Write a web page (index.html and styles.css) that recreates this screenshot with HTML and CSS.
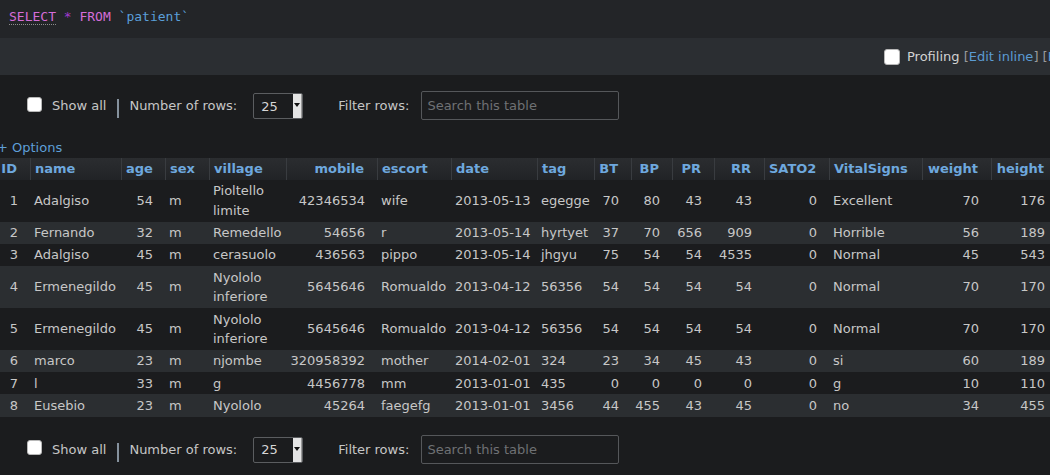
FILE: index.html
```html
<!DOCTYPE html>
<html lang="en">
<head>
<meta charset="utf-8">
<title>patient</title>
<link rel="stylesheet" href="styles.css">
</head>
<body>
<div class="sqlbar"><span class="kw kw-select">SELECT</span> <span class="op">*</span> <span class="kw">FROM</span> <span class="ident">`patient`</span></div>
<div class="toolbar">
  <input type="checkbox" class="cb cb-prof">
  <span class="prof">Profiling</span>&nbsp;<span class="br">[</span><a class="link">Edit inline</a><span class="br">]</span>&nbsp;<span class="br">[</span><a class="link">Edit</a><span class="br">]</span>&nbsp;<span class="br">[</span><a class="link">Explain SQL</a><span class="br">]</span>
</div>
<div class="results">
  <div class="controls controls-top">
    <input type="checkbox" class="cb">
    <span class="lbl">Show all</span>
    <span class="sep"></span>
    <span class="lbl lbl-rows">Number of rows:</span>
    <span class="sel"><select><option>25</option></select></span>
    <span class="lbl lbl-filter">Filter rows:</span>
    <input type="text" class="search" placeholder="Search this table">
  </div>
  <div class="options">+ Options</div>
  <table class="data">
    <colgroup>
      <col class="w-id"><col class="w-name"><col class="w-age"><col class="w-sex"><col class="w-village"><col class="w-mobile"><col class="w-escort"><col class="w-date"><col class="w-tag"><col class="w-bt"><col class="w-bp"><col class="w-pr"><col class="w-rr"><col class="w-sato2"><col class="w-vital"><col class="w-weight"><col class="w-height">
    </colgroup>
    <thead>
      <tr>
        <th class="num">ID</th><th>name</th><th class="num">age</th><th>sex</th><th>village</th><th class="num">mobile</th><th>escort</th><th>date</th><th>tag</th><th class="num">BT</th><th class="num">BP</th><th class="num">PR</th><th class="num">RR</th><th class="num">SATO2</th><th>VitalSigns</th><th class="num">weight</th><th class="num">height</th>
      </tr>
    </thead>
    <tbody>
      <tr><td class="num">1</td><td>Adalgiso</td><td class="num">54</td><td>m</td><td>Pioltello limite</td><td class="num">42346534</td><td>wife</td><td>2013-05-13</td><td>egegge</td><td class="num">70</td><td class="num">80</td><td class="num">43</td><td class="num">43</td><td class="num">0</td><td>Excellent</td><td class="num">70</td><td class="num">176</td></tr>
      <tr><td class="num">2</td><td>Fernando</td><td class="num">32</td><td>m</td><td>Remedello</td><td class="num">54656</td><td>r</td><td>2013-05-14</td><td>hyrtyet</td><td class="num">37</td><td class="num">70</td><td class="num">656</td><td class="num">909</td><td class="num">0</td><td>Horrible</td><td class="num">56</td><td class="num">189</td></tr>
      <tr><td class="num">3</td><td>Adalgiso</td><td class="num">45</td><td>m</td><td>cerasuolo</td><td class="num">436563</td><td>pippo</td><td>2013-05-14</td><td>jhgyu</td><td class="num">75</td><td class="num">54</td><td class="num">54</td><td class="num">4535</td><td class="num">0</td><td>Normal</td><td class="num">45</td><td class="num">543</td></tr>
      <tr><td class="num">4</td><td>Ermenegildo</td><td class="num">45</td><td>m</td><td>Nyololo inferiore</td><td class="num">5645646</td><td>Romualdo</td><td>2013-04-12</td><td>56356</td><td class="num">54</td><td class="num">54</td><td class="num">54</td><td class="num">54</td><td class="num">0</td><td>Normal</td><td class="num">70</td><td class="num">170</td></tr>
      <tr><td class="num">5</td><td>Ermenegildo</td><td class="num">45</td><td>m</td><td>Nyololo inferiore</td><td class="num">5645646</td><td>Romualdo</td><td>2013-04-12</td><td>56356</td><td class="num">54</td><td class="num">54</td><td class="num">54</td><td class="num">54</td><td class="num">0</td><td>Normal</td><td class="num">70</td><td class="num">170</td></tr>
      <tr><td class="num">6</td><td>marco</td><td class="num">23</td><td>m</td><td>njombe</td><td class="num">320958392</td><td>mother</td><td>2014-02-01</td><td>324</td><td class="num">23</td><td class="num">34</td><td class="num">45</td><td class="num">43</td><td class="num">0</td><td>si</td><td class="num">60</td><td class="num">189</td></tr>
      <tr><td class="num">7</td><td>l</td><td class="num">33</td><td>m</td><td>g</td><td class="num">4456778</td><td>mm</td><td>2013-01-01</td><td>435</td><td class="num">0</td><td class="num">0</td><td class="num">0</td><td class="num">0</td><td class="num">0</td><td>g</td><td class="num">10</td><td class="num">110</td></tr>
      <tr><td class="num">8</td><td>Eusebio</td><td class="num">23</td><td>m</td><td>Nyololo</td><td class="num">45264</td><td>faegefg</td><td>2013-01-01</td><td>3456</td><td class="num">44</td><td class="num">455</td><td class="num">43</td><td class="num">45</td><td class="num">0</td><td>no</td><td class="num">34</td><td class="num">455</td></tr>
    </tbody>
  </table>
  <div class="controls controls-bottom">
    <input type="checkbox" class="cb">
    <span class="lbl">Show all</span>
    <span class="sep"></span>
    <span class="lbl lbl-rows">Number of rows:</span>
    <span class="sel"><select><option>25</option></select></span>
    <span class="lbl lbl-filter">Filter rows:</span>
    <input type="text" class="search" placeholder="Search this table">
  </div>
</div>
</body>
</html>
```
FILE: styles.css
```css
html, body {
  margin: 0;
  padding: 0;
  background: #1b1c1e;
  color: #c8c8c8;
  font-family: "DejaVu Sans", sans-serif;
  font-size: 13px;
  overflow: hidden;
}

.sqlbar {
  background: #232528;
  height: 38px;
  box-sizing: border-box;
  padding: 9px 9px 0;
  font-family: "DejaVu Sans Mono", monospace;
  font-size: 13px;
  line-height: 16px;
  color: #a0a0a0;
  white-space: nowrap;
}
.kw { color: #d56dd8; }
.kw-select { border-bottom: 1px dotted #8c8c8c; }
.op { color: #a53acf; }
.ident { color: #5a9fd9; }

.toolbar {
  background: #2b2e32;
  height: 37px;
  display: flex;
  align-items: center;
  padding-left: 884px;
  white-space: nowrap;
  overflow: hidden;
}
.prof { color: #d2d2d2; }
.br { color: #9a9a9a; }
.link { color: #5b9bd3; }

.cb {
  appearance: none;
  -webkit-appearance: none;
  width: 15px;
  height: 15px;
  margin: 0;
  box-sizing: border-box;
  background: #ffffff;
  border: 1px solid #b8b8b8;
  border-radius: 3px;
  flex: none;
}
.cb-prof { width: 16px; height: 16px; margin-right: 7px; }

.results {
  margin-left: -3px;
}

.controls {
  display: flex;
  align-items: center;
  height: 29px;
  padding-left: 30px;
  white-space: nowrap;
}
.controls-top { margin-top: 16px; }
.controls-bottom { margin-top: 18px; }
.controls .cb { margin-right: 10px; margin-top: -3px; }
.lbl { color: #c6c6c6; }
.sep {
  width: 2px;
  height: 19px;
  background: #85919d;
  margin-left: 11px;
  margin-top: 6px;
}
.lbl-rows { margin-left: 10px; }
.sel {
  position: relative;
  display: inline-block;
  margin-left: 16px;
  width: 50px;
  height: 26px;
  margin-top: 1px;
}
.sel select {
  appearance: none;
  -webkit-appearance: none;
  width: 50px;
  height: 26px;
  box-sizing: border-box;
  margin: 0;
  padding: 0 0 0 7px;
  background: #1b1c1e;
  color: #d6d6d6;
  border: 1px solid #5b5d60;
  border-radius: 2px;
  font-family: "DejaVu Sans", sans-serif;
  font-size: 13px;
}
.sel::after {
  content: "";
  position: absolute;
  right: 1px;
  top: 1px;
  bottom: 1px;
  width: 8px;
  background: #e4e4e4;
  border-right: 1px solid #9a9a9a;
}
.sel::before {
  content: "";
  position: absolute;
  z-index: 1;
  right: 3px;
  top: 10px;
  border-left: 3px solid transparent;
  border-right: 3px solid transparent;
  border-top: 4px solid #111;
}
.lbl-filter { margin-left: 35px; }
.search {
  margin-left: 12px;
  width: 198px;
  height: 29px;
  box-sizing: border-box;
  padding: 0 5px;
  background: #1b1c1e;
  color: #d0d0d0;
  border: 1px solid #55575a;
  border-radius: 2px;
  font-family: "DejaVu Sans", sans-serif;
  font-size: 13px;
}
.search::placeholder { color: #6f7174; }

.options {
  color: #5e9fd8;
  line-height: 20px;
  margin-top: 18px;
  height: 20px;
}

.data {
  table-layout: fixed;
  width: 1060px;
  border-collapse: separate;
  border-spacing: 0;
}
.w-id { width: 33px; }
.w-name { width: 91px; }
.w-age { width: 44px; }
.w-sex { width: 44px; }
.w-village { width: 77px; }
.w-mobile { width: 91px; }
.w-escort { width: 74px; }
.w-date { width: 86px; }
.w-tag { width: 57px; }
.w-bt { width: 37px; }
.w-bp { width: 41px; }
.w-pr { width: 42px; }
.w-rr { width: 50px; }
.w-sato2 { width: 65px; }
.w-vital { width: 93px; }
.w-weight { width: 69px; }
.w-height { width: 66px; }

.data th {
  color: #6ea8de;
  font-weight: bold;
  text-align: left;
  padding: 1px 4px;
  line-height: 20px;
  white-space: nowrap;
  background: linear-gradient(#2b2d30, #212326);
  border-left: 1px solid #393c40;
}
.data th:first-child { border-left: none; }
.data td {
  padding: 1.4px 4px;
  line-height: 19.5px;
  vertical-align: middle;
  color: #c7c7c7;
}
.data .num { text-align: right; padding-right: 12px; }
.data th.num { padding-right: 13px; }
.data tbody tr:nth-child(even) td { background: #2b2e31; }
```
